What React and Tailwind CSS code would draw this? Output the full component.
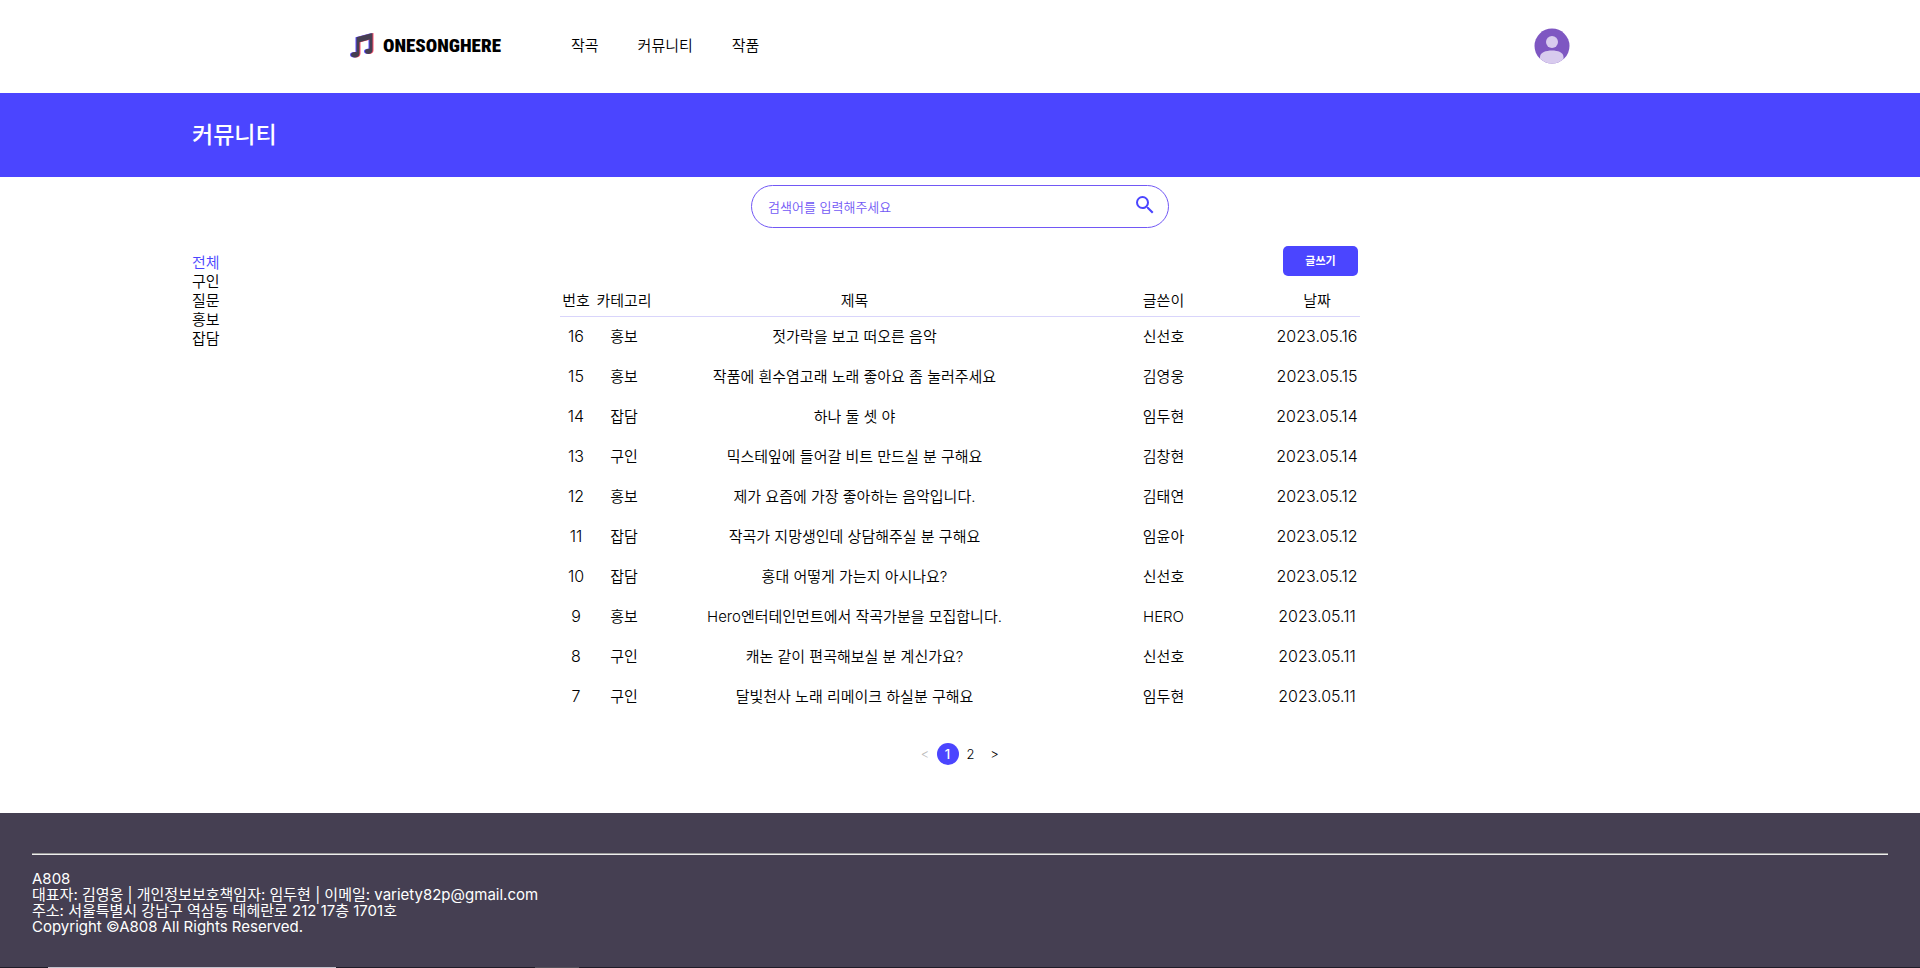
const navItems = ['작곡', '커뮤니티', '작품'];
const categories = ['전체', '구인', '질문', '홍보', '잡담'];
const posts = [
  [16, '홍보', '젓가락을 보고 떠오른 음악', '신선호', '2023.05.16'],
  [15, '홍보', '작품에 흰수염고래 노래 좋아요 좀 눌러주세요', '김영웅', '2023.05.15'],
  [14, '잡담', '하나 둘 셋 야', '임두현', '2023.05.14'],
  [13, '구인', '믹스테잎에 들어갈 비트 만드실 분 구해요', '김창현', '2023.05.14'],
  [12, '홍보', '제가 요즘에 가장 좋아하는 음악입니다.', '김태연', '2023.05.12'],
  [11, '잡담', '작곡가 지망생인데 상담해주실 분 구해요', '임윤아', '2023.05.12'],
  [10, '잡담', '홍대 어떻게 가는지 아시나요?', '신선호', '2023.05.12'],
  [9, '홍보', 'Hero엔터테인먼트에서 작곡가분을 모집합니다.', 'HERO', '2023.05.11'],
  [8, '구인', '캐논 같이 편곡해보실 분 계신가요?', '신선호', '2023.05.11'],
  [7, '구인', '달빛천사 노래 리메이크 하실분 구해요', '임두현', '2023.05.11'],
];

const notePath =
  'M6.500 5.300 22.500 1V18.500C22.500 20.800 20.500 22 18.500 22C16.500 22 15 21 15 19.300C15 17.500 16.800 16.600 19.500 16.800V7.500L9.500 10.200V21.500C9.500 24.300 7.500 25.500 5 25.500C2.800 25.500 1 24.500 1 22.800C1 20.800 3.500 19.800 6.500 20.200Z';

function Logo() {
  return (
    <a href="#home" aria-label="ONESONGHERE" className="flex items-center gap-2">
      <svg viewBox="0 0 25 27" className="h-[27px] w-[25px]" aria-hidden="true">
        <path d={notePath} fill="#5b4bff" transform="translate(-1 0)" />
        <path d={notePath} fill="#ff4f6d" transform="translate(1 0)" />
        <path d={notePath} fill="#453f52" />
      </svg>
      <span className="w-[121px] font-['Liberation_Sans_Narrow','Roboto_Condensed',Roboto,sans-serif] text-[19px] font-black whitespace-nowrap">
        ONESONGHERE
      </span>
    </a>
  );
}

function Header() {
  return (
    <header className="mx-auto flex h-[93px] w-full max-w-[1220px] items-center pb-0.5">
      <Logo />
      <nav className="ml-[67px] flex gap-[39px]">
        {navItems.map((item) => (
          <a key={item} href="#nav">{item}</a>
        ))}
      </nav>
      <button type="button" aria-label="프로필" className="ml-auto">
        <svg viewBox="0 0 36 36" className="size-9" aria-hidden="true">
          <clipPath id="avatar"><circle cx="18" cy="18" r="17.500" /></clipPath>
          <g clipPath="url(#avatar)">
            <rect width="36" height="36" fill="#7e57c2" />
            <circle cx="18" cy="14" r="6" fill="#d8cbee" />
            <path d="M6 36V29C6 24.500 12 22.500 18 22.500S29.500 24.500 29.500 29V36Z" fill="#d8cbee" />
          </g>
        </svg>
      </button>
    </header>
  );
}

function Board() {
  return (
    <table className="w-full table-fixed border-collapse text-center">
      <colgroup>
        <col className="w-8" />
        <col className="w-16" />
        <col />
        <col className="w-[221px]" />
        <col className="w-[86px]" />
      </colgroup>
      <thead>
        <tr className="h-8 border-b border-[#d9d5fb]">
          {['번호', '카테고리', '제목', '글쓴이', '날짜'].map((label) => (
            <th key={label} scope="col" className="p-0 pt-0.5 font-[350] whitespace-nowrap">{label}</th>
          ))}
        </tr>
      </thead>
      <tbody>
        {posts.map(([id, category, title, author, date]) => (
          <tr key={id} className="h-10">
            <td className="p-0 text-base font-light">{id}</td>
            <td className="p-0 pt-0.5">{category}</td>
            <td className="p-0 pt-0.5"><a href="#post">{title}</a></td>
            <td className="p-0 pt-0.5">{author}</td>
            <td className="p-0 text-base font-light">{date}</td>
          </tr>
        ))}
      </tbody>
    </table>
  );
}

export default function App() {
  return (
    <div className="bg-white font-['Inter','Noto_Sans_CJK_KR',sans-serif] text-[15px] leading-5 font-[350] text-black">
      <Header />
      <div className="flex h-21 items-center bg-[#4b45ff] px-[10%]">
        <h1 className="text-[23px] font-medium text-white">커뮤니티</h1>
      </div>
      <main className="px-[10%] pt-2 pb-12">
        <form className="mx-auto flex h-[43px] w-[418px] items-center rounded-full border border-[#7258f5] pr-[11px] pl-4">
          <input
            type="search"
            aria-label="검색어"
            placeholder="검색어를 입력해주세요"
            className="min-w-0 flex-1 text-[13px] outline-none placeholder:text-[#7258f5]"
          />
          <button type="submit" aria-label="검색" className="pb-1">
            <svg viewBox="0 0 24 24" className="size-6 fill-[#4b45ff]" aria-hidden="true">
              <path d="M15.500 14h-.79l-.28-.27A6.471 6.471 0 0 0 16 9.500 6.500 6.500 0 1 0 9.500 16c1.610 0 3.090-.59 4.230-1.570l.27.28v.79l5 4.990L20.490 19l-4.990-5zm-6 0C7.010 14 5 11.990 5 9.500S7.010 5 9.500 5 14 7.010 14 9.500 11.990 14 9.500 14z" />
            </svg>
          </button>
        </form>
        <div className="grid grid-cols-[1fr_800px_1fr] pt-[18px]">
          <ul className="pt-[7px] leading-[19px]">
            {categories.map((c) => (
              <li key={c}>
                <a href="#category" className={c === '전체' ? 'text-[#4b45ff]' : ''}>{c}</a>
              </li>
            ))}
          </ul>
          <section>
            <div className="flex justify-end pr-0.5 pb-2">
              <button type="button" className="h-[30px] w-[75px] rounded-[5px] bg-[#4b45ff] text-[11px] font-semibold text-white">글쓰기</button>
            </div>
            <Board />
            <nav aria-label="페이지" className="mt-[27px] flex items-center justify-center text-[13px]">
              <button type="button" disabled className="w-[23px] text-[#bbb]">&lt;</button>
              <button type="button" className="size-[22px] rounded-full bg-[#4b45ff] font-medium text-white">1</button>
              <button type="button" className="w-6">2</button>
              <button type="button" className="w-6">&gt;</button>
            </nav>
          </section>
        </div>
      </main>
      <footer className="bg-[#453f52] text-[15px] leading-4 font-normal text-white">
        <div className="px-8 pt-10 pb-8">
          <hr className="mb-4 h-0.5 border-t border-b border-t-[#9a9a9a] border-b-[#eeeeee]" />
          <p>A808</p>
          <p>대표자: 김영웅 | 개인정보보호책임자: 임두현 | 이메일: variety82p@gmail.com</p>
          <p>주소: 서울특별시 강남구 역삼동 테헤란로 212 17층 1701호</p>
          <p>Copyright ©A808 All Rights Reserved.</p>
        </div>
        <div className="flex h-px bg-[#1f1c28] pl-12">
          <div className="w-[288px] bg-[#c4c2cc]" />
          <div className="ml-[199px] w-11 bg-[#55525c]" />
        </div>
      </footer>
    </div>
  );
}
